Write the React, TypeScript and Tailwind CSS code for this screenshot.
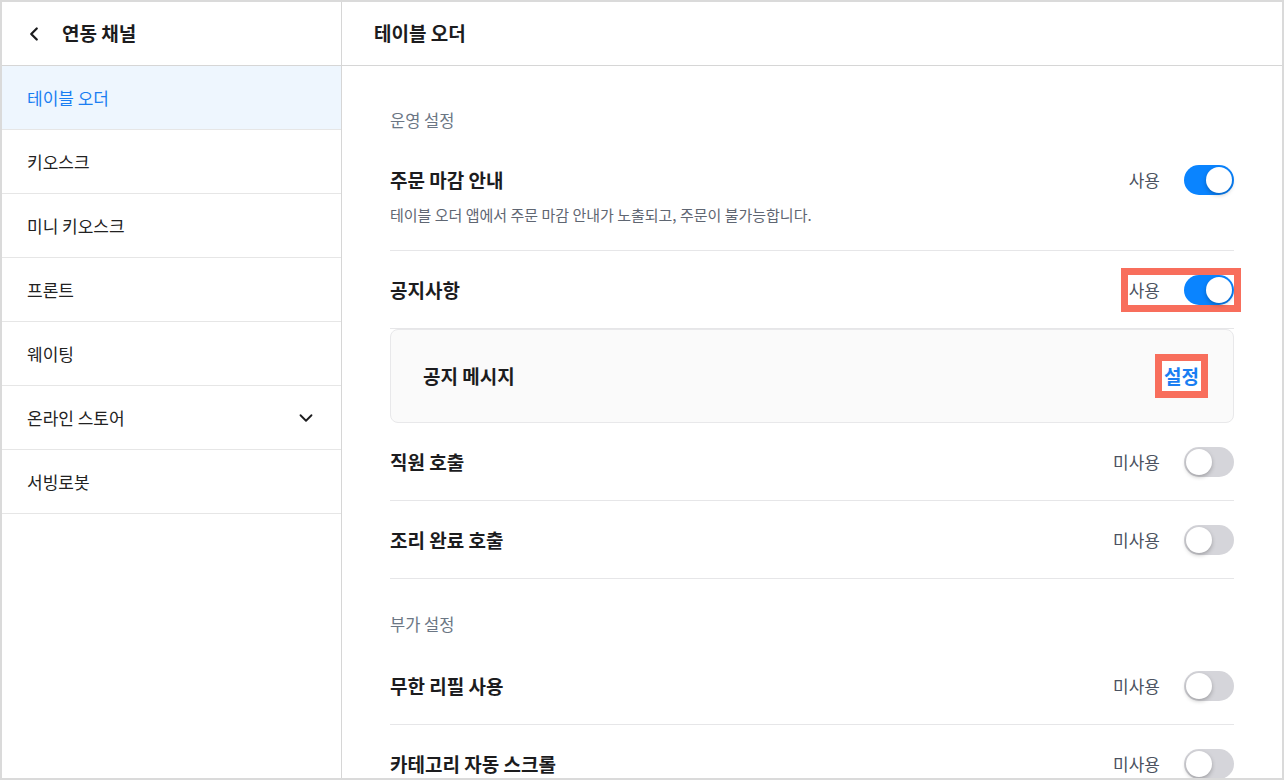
import { ChevronDown, ChevronLeft } from "lucide-react";

const menu = ["테이블 오더", "키오스크", "미니 키오스크", "프론트", "웨이팅", "온라인 스토어", "서빙로봇"];

const Toggle = ({ on }: { on: boolean }) => (
  <div
    className={`relative w-[50px] h-[30px] rounded-full ${on ? "bg-[#0a84ff]" : "bg-[#d5d5da]"}`}
  >
    <div
      className={`absolute top-[2px] w-[26px] h-[26px] rounded-full bg-white shadow-[0_2px_4px_rgba(0,0,0,0.25)] ${
        on ? "right-[2px]" : "left-[2px]"
      }`}
    />
  </div>
);

interface RowProps {
  title: string;
  desc?: string;
  on: boolean;
  mark?: boolean;
  last?: boolean;
}

const Row = (props: RowProps) => {
  return (
    <div
      className={`flex justify-between ${
        props.desc ? "items-start pt-[23px] pb-[25px]" : "items-center h-[78px]"
      } ${props.last ? "" : "border-b border-[#e6e6e8]"}`}
    >
      <div>
        <div className="text-[19px] leading-[27px] font-semibold text-[#1c1c1e]">{props.title}</div>
        {props.desc && (
          <div className="mt-[11px] text-[15px] leading-[21px] text-[#5f6672]">{props.desc}</div>
        )}
      </div>
      <div
        className={`flex items-center gap-6 pl-px ${
          props.mark ? "bg-white outline-solid outline-7 outline-[#f86e5c]" : ""
        } ${props.desc ? "-mt-[1px]" : ""}`}
      >
        <span className="text-[17px] text-[#4b5260]">{props.on ? "사용" : "미사용"}</span>
        <Toggle on={props.on} />
      </div>
    </div>
  );
};

const Label = ({ children }: { children: string }) => (
  <div className="pt-[34px] pb-3 text-[16.5px] leading-[22px] text-[#6b7684]">{children}</div>
);

export default function App() {
  return (
    <div className="w-[1284px] h-[780px] border-2 border-[#dadada] flex overflow-hidden bg-white font-['Noto_Sans_CJK_KR',sans-serif]">
      <aside className="w-[340px] shrink-0 border-r border-[#d6d6d6]">
        <div className="h-[64px] flex items-center pl-[21px] gap-[17px] border-b border-[#d6d6d6]">
          <ChevronLeft size={22} strokeWidth={2.5} className="text-[#1c1c1e]" />
          <span className="text-[19px] font-bold text-[#1c1c1e]">연동 채널</span>
        </div>
        {menu.map((item, i) => (
          <div
            key={item}
            className={`h-[64px] flex items-center justify-between pl-[25px] pr-6 border-b border-[#e6e6e6] text-[17px] ${
              i === 0 ? "bg-[#eef6fe] text-[#1a7ef2]" : "text-[#222]"
            }`}
          >
            <span>{item}</span>
            {item === "온라인 스토어" && <ChevronDown size={22} strokeWidth={2} className="text-[#1c1c1e]" />}
          </div>
        ))}
      </aside>

      <main className="flex-1 flex flex-col">
        <div className="h-[64px] shrink-0 flex items-center px-8 border-b border-[#d6d6d6]">
          <h1 className="text-[19px] font-bold text-[#1c1c1e]">테이블 오더</h1>
        </div>
        <div className="px-12 pt-[9px]">
          <Label>운영 설정</Label>
          <Row
            title="주문 마감 안내"
            desc="테이블 오더 앱에서 주문 마감 안내가 노출되고, 주문이 불가능합니다."
            on
          />
          <Row title="공지사항" on mark />
          <div className="h-[94px] flex items-center justify-between px-8 rounded-lg border border-[#e8e8ea] bg-[#fafafa]">
            <span className="text-[19px] font-semibold text-[#1c1c1e]">공지 메시지</span>
            <span className="h-[30px] flex items-center px-[2px] bg-white text-[19px] font-bold text-[#1a7ef2] outline-solid outline-7 outline-[#f86e5c]">
              설정
            </span>
          </div>
          <Row title="직원 호출" on={false} />
          <Row title="조리 완료 호출" on={false} />
          <Label>부가 설정</Label>
          <Row title="무한 리필 사용" on={false} />
          <Row title="카테고리 자동 스크롤" on={false} />
        </div>
      </main>
    </div>
  );
}
